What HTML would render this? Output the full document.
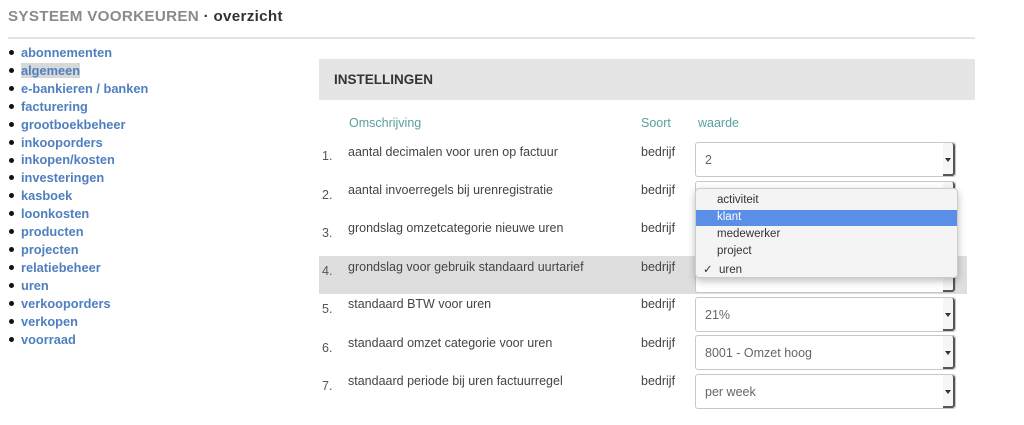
<!DOCTYPE html>
<html><head><meta charset="utf-8"><style>
body{margin:0;width:1024px;height:425px;background:#fff;font-family:"Liberation Sans",sans-serif;position:relative;overflow:hidden}
.a{position:absolute;white-space:nowrap}
.title{left:8px;top:8px;font-size:15.2px;color:#8a8a8a;font-weight:bold;letter-spacing:0.3px}
.title b{color:#333}
.hr{left:8px;top:37px;width:967px;height:2px;background:#e4e4e4}
ul{position:absolute;left:8px;top:44px;margin:0;padding:0;list-style:none}
li{font-size:12.8px;line-height:17.9px;font-weight:bold;color:#4f7fbf}
li:before{content:"";display:inline-block;width:5px;height:5px;border-radius:50%;background:#111;margin:0 7px 2px 1px;vertical-align:middle}
li span.sel{background:#d8d8d8}
.hd{left:319px;top:59px;width:656px;height:41px;background:#e5e5e5}
.hd span{position:absolute;left:15px;top:13px;font-size:13.5px;color:#333;font-weight:bold}
.th{font-size:12.5px;color:#5a9fa0;top:116px}
.n{left:322px;font-size:12.5px;color:#555}
.t{left:348px;font-size:12.5px;color:#444}
.s{left:641px;font-size:12.5px;color:#444}
.hl{left:319px;top:256px;width:648px;height:38px;background:#dedede}
.box{position:absolute;left:695px;width:259px;height:33px;border:1px solid #c8c8c8;border-radius:3px;background:#fff}
.box:after{content:"";position:absolute;right:0;top:0;width:12px;height:100%;background:#f6f6f6;border-right:2px solid #555;border-bottom:2px solid #555;box-sizing:border-box;border-radius:0 3px 3px 0}
.box i{position:absolute;right:4px;top:15px;width:0;height:0;border-left:3px solid transparent;border-right:3px solid transparent;border-top:4px solid #333;z-index:2}
.box span{position:absolute;left:9px;top:10px;font-size:12.5px;color:#666}
.dd{left:695px;top:188px;width:261px;height:88px;background:#f4f4f4;border:1px solid #ccc;border-radius:4px;box-shadow:0 3px 8px rgba(0,0,0,.25);z-index:5}
.dd div{position:absolute;left:21px;font-size:11.5px;color:#333}
.dd .k{left:0;width:261px;height:16px;top:21px;background:#5b8ee6;color:#fff}
.dd .k span{position:absolute;left:21px;top:1px}
</style></head><body>
<div class="a title">SYSTEEM VOORKEUREN <b>· overzicht</b></div>
<div class="a hr"></div>
<ul>
<li>abonnementen</li><li><span class="sel">algemeen</span></li><li>e-bankieren / banken</li><li>facturering</li><li>grootboekbeheer</li><li>inkooporders</li><li>inkopen/kosten</li><li>investeringen</li><li>kasboek</li><li>loonkosten</li><li>producten</li><li>projecten</li><li>relatiebeheer</li><li>uren</li><li>verkooporders</li><li>verkopen</li><li>voorraad</li>
</ul>
<div class="a hd"><span>INSTELLINGEN</span></div>
<div class="a hl"></div>
<div class="a th" style="left:349px">Omschrijving</div>
<div class="a th" style="left:641px">Soort</div>
<div class="a th" style="left:698px">waarde</div>

<div class="a n" style="top:149px">1.</div><div class="a t" style="top:145px">aantal decimalen voor uren op factuur</div><div class="a s" style="top:145px">bedrijf</div>
<div class="a n" style="top:188px">2.</div><div class="a t" style="top:183px">aantal invoerregels bij urenregistratie</div><div class="a s" style="top:183px">bedrijf</div>
<div class="a n" style="top:226px">3.</div><div class="a t" style="top:221px">grondslag omzetcategorie nieuwe uren</div><div class="a s" style="top:221px">bedrijf</div>
<div class="a n" style="top:264px">4.</div><div class="a t" style="top:260px">grondslag voor gebruik standaard uurtarief</div><div class="a s" style="top:260px">bedrijf</div>
<div class="a n" style="top:302px">5.</div><div class="a t" style="top:297px">standaard BTW voor uren</div><div class="a s" style="top:297px">bedrijf</div>
<div class="a n" style="top:341px">6.</div><div class="a t" style="top:336px">standaard omzet categorie voor uren</div><div class="a s" style="top:336px">bedrijf</div>
<div class="a n" style="top:379px">7.</div><div class="a t" style="top:374px">standaard periode bij uren factuurregel</div><div class="a s" style="top:374px">bedrijf</div>

<div class="box" style="top:142px"><span>2</span><i></i></div>
<div class="box" style="top:181px"><i></i></div>
<div class="box" style="top:258px"><i></i></div>
<div class="box" style="top:297px"><span>21%</span><i></i></div>
<div class="box" style="top:335px"><span>8001 - Omzet hoog</span><i></i></div>
<div class="box" style="top:374px"><span>per week</span><i></i></div>

<div class="a dd">
<div style="top:5px">activiteit</div>
<div class="k"><span>klant</span></div>
<div style="top:39px">medewerker</div>
<div style="top:56px">project</div>
<div style="top:73px;left:7px">✓&nbsp;&nbsp;uren</div>
</div>
</body></html>
